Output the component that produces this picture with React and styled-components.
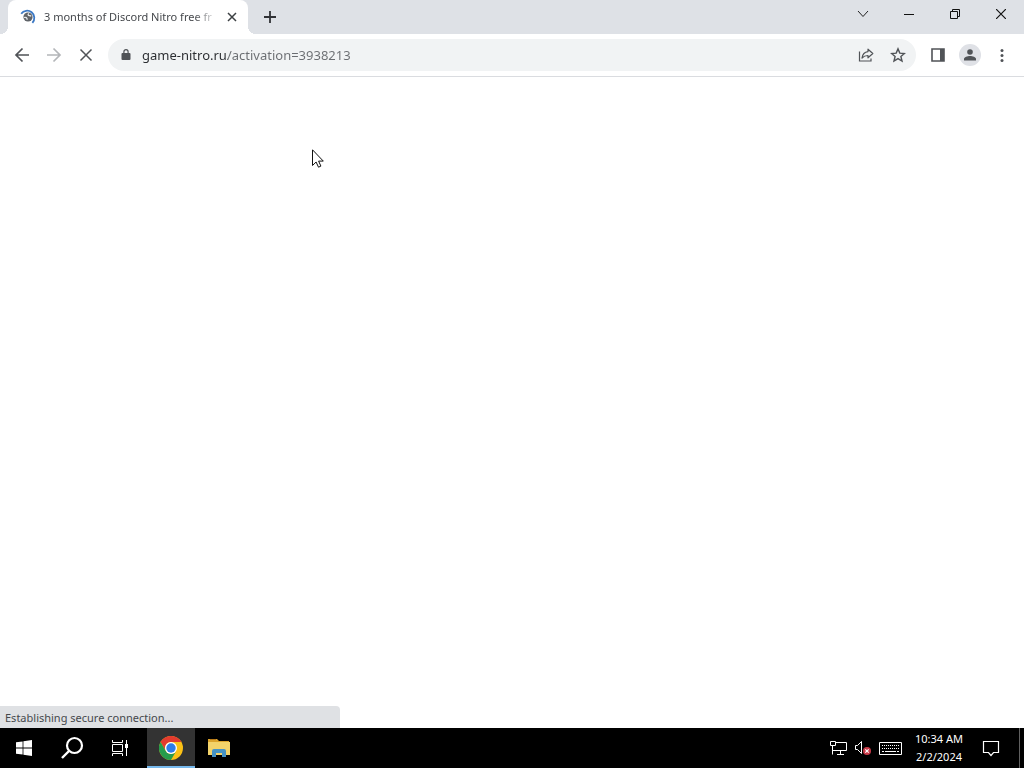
import React, { useState } from "react";
import styled, { createGlobalStyle } from "styled-components";

const GlobalStyle = createGlobalStyle`
  * { box-sizing: border-box; }
  body {
    margin: 0;
    font-family: "Noto Sans", "Open Sans", sans-serif;
    font-size: 11px;
    color: #45484c;
  }
  button { border: 0; padding: 0; background: none; font: inherit; color: inherit; }
  svg { display: block; }
`;

const Desktop = styled.div`
  display: flex;
  flex-direction: column;
  min-height: 100vh;
  background: #fff;
`;

const TabStrip = styled.header`
  display: flex;
  height: 34px;
  padding-left: 8px;
  background: #dee1e6;
`;

const Tab = styled.div`
  position: relative;
  display: flex;
  align-items: center;
  width: 240px;
  padding: 0 8px 0 12px;
  border-radius: 8px 8px 0 0;
  background: #fff;

  &::before,
  &::after {
    content: "";
    position: absolute;
    bottom: 0;
    width: 8px;
    height: 8px;
  }
  &::before {
    right: 100%;
    background: radial-gradient(circle at 0 0, transparent 8px, #fff 8px);
  }
  &::after {
    left: 100%;
    background: radial-gradient(circle at 100% 0, transparent 8px, #fff 8px);
  }
`;

const TabTitle = styled.span`
  flex: 1;
  min-width: 0;
  margin: 0 6px 0 8px;
  line-height: 16px;
  white-space: nowrap;
  mask-image: linear-gradient(to right, #000 calc(100% - 24px), transparent);
`;

const StripButton = styled.button`
  display: grid;
  place-items: center;
  width: ${(p) => p.$width}px;
  height: ${(p) => p.$height}px;
  color: ${(p) => p.$color};
`;

const NewTab = styled.div`
  margin-left: 8px;
`;

const WindowControls = styled.div`
  display: flex;
  margin-left: auto;
`;

const Toolbar = styled.nav`
  display: flex;
  align-items: center;
  height: 43px;
  padding: 0 6px;
  background: #fff;
  border-bottom: 1px solid #dadce0;
`;

const ToolButton = styled.button`
  display: grid;
  place-items: center;
  width: 32px;
  height: 32px;
  color: ${(p) => (p.disabled ? "#b4b6b9" : "#505357")};
`;

const AddressBar = styled.div`
  display: flex;
  align-items: center;
  flex: 1;
  height: 32px;
  margin: 0 6px;
  padding: 0 2px 0 10px;
  border-radius: 16px;
  background: #f1f3f4;
  color: #505357;
`;

const AddressInput = styled.input`
  flex: 1;
  min-width: 0;
  height: 28px;
  margin-left: 8px;
  padding: 0;
  border: 0;
  outline: 0;
  font: 13px/20px "Noto Sans", "Open Sans", sans-serif;
  color: transparent;
  caret-color: #202124;
  background: linear-gradient(to right, #2a2c30 86px, #6a6d71 86px);
  background-clip: text;
`;

const Avatar = styled.span`
  display: grid;
  place-items: center;
  width: 22px;
  height: 22px;
  border-radius: 50%;
  background: #dfe1e6;
`;

const Page = styled.main`
  position: relative;
  flex: 1;
`;

const Pointer = styled.svg`
  position: absolute;
  left: 312px;
  top: 72px;
`;

const StatusBubble = styled.div`
  position: absolute;
  left: 0;
  bottom: 0;
  width: 340px;
  padding: 4px 5px 2px;
  line-height: 16px;
  border-top-right-radius: 4px;
  background: #dfe1e4;
`;

const Taskbar = styled.footer`
  display: flex;
  height: 40px;
  background: #000;
  color: #fff;
`;

const TaskGroup = styled.div`
  display: flex;
  padding-right: 3px;
`;

const TaskButton = styled.button`
  display: grid;
  place-items: center;
  width: 48px;
  height: 40px;
  background: ${(p) => (p.$active ? "#333" : "none")};
  box-shadow: ${(p) => (p.$active ? "inset 0 -2px #76b9ed" : "none")};
`;

const Tray = styled.div`
  display: flex;
  align-items: center;
  margin-left: auto;
`;

const TrayButton = styled.button`
  display: grid;
  place-items: center;
  width: ${(p) => p.$width}px;
  height: 40px;
`;

const Clock = styled.button`
  width: 68px;
  line-height: 18px;
  text-align: center;

  time { display: block; }
`;

const ShowDesktop = styled.button`
  width: 5px;
  height: 40px;
  margin-left: 10px;
  border-left: 1px solid #606060;
`;

const Svg = ({ w = 16, h = w, children, ...rest }) => (
  <svg width={w} height={h} viewBox={`0 0 ${w} ${h}`} fill="none" stroke="currentColor" aria-hidden="true" {...rest}>
    {children}
  </svg>
);

const LoadingIcon = () => (
  <Svg>
    <path d="M1.200 4.800A7.200 7.200 0 1 1 12.400 13.800" stroke="#3b78c4" strokeWidth="1.800" />
    <circle cx="8" cy="8" r="4.600" fill="#5f6368" stroke="none" />
    <path d="M4 8.500c2-.6 3 .2 3.200 2.200M9 4.500c-1.500.8-1 2 .5 2.200l1.700.3" stroke="#e4e7ea" strokeWidth="1.300" />
  </Svg>
);

const ChromeIcon = () => (
  <Svg w={24} stroke="none">
    <circle cx="12" cy="12" r="12" fill="#fbc116" />
    <path d="M1.600 6A12 12 0 0 1 22.400 6H12a6 6 0 0 0-5.200 9Z" fill="#e33b2e" />
    <path d="M1.600 6A12 12 0 0 0 12 24l5.200-9A6 6 0 0 1 6.800 15Z" fill="#269c4c" />
    <circle cx="12" cy="12" r="6" fill="#fff" />
    <circle cx="12" cy="12" r="4.700" fill="#2f7de9" />
  </Svg>
);

const FolderIcon = () => (
  <Svg w={22} h={20} stroke="none">
    <path d="M0 1h9l2 2h10v6H0Z" fill="#dca42c" />
    <path d="M2 1h6v1H2Z" fill="#b97b18" />
    <path d="M0 4h22v13H0Z" fill="#f3d36a" />
    <path d="M4 19v-6a2 2 0 0 1 2-2h10a2 2 0 0 1 2 2v6h-4v-4H8v4Z" fill="#4592c4" />
    <path d="M8 15h6v2H8Z" fill="#f3d36a" />
  </Svg>
);

const NetworkIcon = () => (
  <Svg w={18} h={14}>
    <path d="M6 1.500h10.500v8H4M2.500 5v8.500M10.500 9.500v4M7 13.500h7" />
    <path d="M.5.500h5v4h-5ZM2.500 9.500h3" />
  </Svg>
);

const VolumeIcon = () => (
  <Svg w={18} h={16}>
    <path d="M1.500 5.500h2l4-4v12l-4-4h-2Z" />
    <circle cx="13" cy="11" r="4" fill="#c93a48" stroke="none" />
    <path d="m11.300 9.300 3.400 3.400m0-3.400-3.400 3.400" stroke="#fff" strokeWidth="1.200" />
  </Svg>
);

const KeyboardIcon = () => (
  <Svg w={23} h={13}>
    <path d="M.5.5h22v12H.5Z" />
    <path d="M3 3.500h17M3 6.500h17" strokeDasharray="1 1" />
    <path d="M3 9.500h2M6 9.500h11M18 9.500h2" />
  </Svg>
);

export default function App() {
  const [url, setUrl] = useState("game-nitro.ru/activation=3938213");
  return (
    <Desktop>
      <GlobalStyle />
      <TabStrip>
        <Tab>
          <LoadingIcon />
          <TabTitle>3 months of Discord Nitro free fr</TabTitle>
          <StripButton $width={16} $height={16} $color="#3c4043" aria-label="Close tab">
            <Svg w={10}><path d="m1 1 8 8m0-8-8 8" strokeWidth="1.500" /></Svg>
          </StripButton>
        </Tab>
        <NewTab>
          <StripButton $width={28} $height={34} $color="#303236" aria-label="New tab">
            <Svg w={12}><path d="M6 0v12M0 6h12" strokeWidth="1.800" /></Svg>
          </StripButton>
        </NewTab>
        <WindowControls>
          <StripButton $width={46} $height={28} $color="#222" aria-label="Search tabs">
            <Svg w={12} h={8}><path d="m1 1 5 5.500L11 1" /></Svg>
          </StripButton>
          <StripButton $width={46} $height={28} $color="#111" aria-label="Minimize">
            <Svg w={10}><path d="M0 5.500h10" /></Svg>
          </StripButton>
          <StripButton $width={46} $height={28} $color="#111" aria-label="Restore">
            <Svg w={10}><path d="M.5 2.500h7v7h-7ZM2.500 2.500v-2h7v7h-2" /></Svg>
          </StripButton>
          <StripButton $width={46} $height={28} $color="#111" aria-label="Close window">
            <Svg w={10}><path d="m0 0 10 10M10 0 0 10" strokeWidth="1.200" /></Svg>
          </StripButton>
        </WindowControls>
      </TabStrip>

      <Toolbar>
        <ToolButton aria-label="Back">
          <Svg><path d="M15 8H2m6.500-6.500L2 8l6.500 6.500" strokeWidth="1.700" /></Svg>
        </ToolButton>
        <ToolButton aria-label="Forward" disabled>
          <Svg><path d="M1 8h13M7.500 1.500 14 8l-6.500 6.500" strokeWidth="1.700" /></Svg>
        </ToolButton>
        <ToolButton aria-label="Stop">
          <Svg><path d="m2.500 2.500 11 11m0-11-11 11" strokeWidth="1.500" /></Svg>
        </ToolButton>
        <AddressBar>
          <Svg>
            <path d="M4.500 6h7a1 1 0 0 1 1 1v5a1 1 0 0 1-1 1h-7a1 1 0 0 1-1-1V7a1 1 0 0 1 1-1Z" fill="currentColor" stroke="none" />
            <path d="M5.900 6.500V4.700a2.100 2.100 0 0 1 4.200 0v1.800" strokeWidth="1.200" />
          </Svg>
          <AddressInput aria-label="Address and search bar" value={url} onChange={(e) => setUrl(e.target.value)} />
          <ToolButton aria-label="Share">
            <Svg>
              <path d="M1.500 4.500v9.500h11.500v-2.500" strokeWidth="1.200" />
              <path d="M10 2.200 14.800 6.500 10 10.800V8.500C7.500 8.500 5.600 9.300 4 11 4.500 7.600 6.500 5 10 4.600Z" strokeWidth="1.200" strokeLinejoin="round" />
            </Svg>
          </ToolButton>
          <ToolButton aria-label="Bookmark this page">
            <Svg>
              <path d="m8 1.900 1.800 4.200 4.600.4-3.500 3 1.100 4.500-4-2.400L4 14l1.100-4.500-3.500-3 4.600-.4Z" strokeWidth="1.400" />
            </Svg>
          </ToolButton>
        </AddressBar>
        <ToolButton aria-label="Side panel">
          <Svg>
            <path d="M2 2h12v12H2Z" strokeWidth="1.600" />
            <path d="M10 2h4v12h-4Z" fill="currentColor" stroke="none" />
          </Svg>
        </ToolButton>
        <ToolButton aria-label="Profile">
          <Avatar>
            <Svg w={14} stroke="none" fill="currentColor">
              <circle cx="7" cy="4" r="2.800" />
              <path d="M1 12.500v-1.500C1 9 4.500 8 7 8s6 1 6 3v1.500Z" />
            </Svg>
          </Avatar>
        </ToolButton>
        <ToolButton aria-label="Menu">
          <Svg stroke="none" fill="currentColor">
            <circle cx="8" cy="3.500" r="1.500" />
            <circle cx="8" cy="8.500" r="1.500" />
            <circle cx="8" cy="13.500" r="1.500" />
          </Svg>
        </ToolButton>
      </Toolbar>

      <Page>
        <Pointer width="12" height="20" viewBox="0 0 12 20" aria-hidden="true">
          <path d="M.5.8v15.700l3.600-3.500 2.400 5.200 2.400-1.100-2.300-5h4.700Z" fill="#fff" stroke="#111" />
        </Pointer>
        <StatusBubble role="status">Establishing secure connection...</StatusBubble>
      </Page>

      <Taskbar>
        <TaskGroup>
          <TaskButton aria-label="Start">
            <Svg stroke="none" fill="currentColor">
              <path d="M0 2.300 6.600 1.400v6.200H0ZM7.400 1.300 16 0v7.600H7.400ZM0 8.400h6.600v6.200L0 13.700ZM7.400 8.400H16V16l-8.600-1.300Z" />
            </Svg>
          </TaskButton>
          <TaskButton aria-label="Search">
            <Svg w={24}>
              <circle cx="14.500" cy="9.500" r="7.500" strokeWidth="2.200" />
              <path d="m9 15-7 7" strokeWidth="2.400" />
            </Svg>
          </TaskButton>
          <TaskButton aria-label="Task view">
            <Svg>
              <path d="M.5 0v2.500h10V0M.5 16v-2.500h10V16M.5 4.500h10v7H.5ZM14.500 0v16" />
              <path d="M13 4h3v4h-3Z" fill="currentColor" stroke="none" />
            </Svg>
          </TaskButton>
        </TaskGroup>
        <TaskButton $active aria-label="Google Chrome"><ChromeIcon /></TaskButton>
        <TaskButton aria-label="File Explorer"><FolderIcon /></TaskButton>
        <Tray>
          <TrayButton $width={24} aria-label="Network"><NetworkIcon /></TrayButton>
          <TrayButton $width={24} aria-label="Volume muted"><VolumeIcon /></TrayButton>
          <TrayButton $width={30} aria-label="Touch keyboard"><KeyboardIcon /></TrayButton>
          <Clock aria-label="Date and time">
            <time>10:34 AM</time>
            <time>2/2/2024</time>
          </Clock>
          <TrayButton $width={36} aria-label="Notifications">
            <Svg w={18} h={18}>
              <path d="M1.500 2.500h15v11h-5l-2.500 3-2.500-3h-5Z" strokeWidth="1.200" />
            </Svg>
          </TrayButton>
          <ShowDesktop aria-label="Show desktop" />
        </Tray>
      </Taskbar>
    </Desktop>
  );
}
